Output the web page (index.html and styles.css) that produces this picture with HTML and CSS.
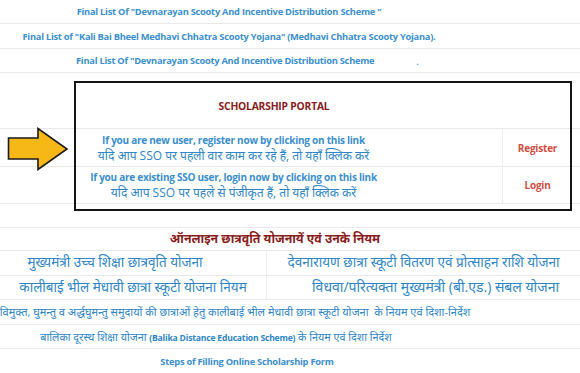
FILE: index.html
```html
<!DOCTYPE html>
<html lang="hi">
<head>
<meta charset="utf-8">
<title>Scholarship Portal</title>
<link rel="stylesheet" href="styles.css">
</head>
<body>
<div class="page">
  <div class="row link-row r1"><a class="en-link" href="#">Final List Of "Devnarayan Scooty And Incentive Distribution Scheme "</a></div>
  <div class="row link-row r2"><a class="en-link" href="#">Final List of "Kali Bai Bheel Medhavi Chhatra Scooty Yojana" (Medhavi Chhatra Scooty Yojana).</a></div>
  <div class="row link-row r3"><a class="en-link" href="#">Final List Of "Devnarayan Scooty And Incentive Distribution Scheme</a><span class="dot">.</span></div>

  <section class="portal">
    <div class="row portal-title"><h2>SCHOLARSHIP PORTAL</h2></div>
    <div class="row portal-row reg">
      <div class="info">
        <span class="en">If you are new user, register now by clicking on this link</span>
        <span class="hi">यदि आप SSO पर पहली वार काम कर रहे हैं, तो यहाँ क्लिक करें</span>
      </div>
      <div class="action"><a href="#">Register</a></div>
    </div>
    <div class="row portal-row login">
      <div class="info">
        <span class="en">If you are existing SSO user, login now by clicking on this link</span>
        <span class="hi">यदि आप SSO पर पहले से पंजीकृत हैं, तो यहाँ क्लिक करें</span>
      </div>
      <div class="action"><a href="#">Login</a></div>
    </div>
    <div class="frame"></div>
    <svg class="arrow" width="62" height="44" viewBox="0 0 62 44" aria-hidden="true">
      <polygon points="1.5,11 31,11 31,1.5 60,22 31,42.5 31,32 1.5,32" fill="#f5b816" stroke="#1a1a1a" stroke-width="1.6" stroke-linejoin="miter"/>
    </svg>
  </section>

  <div class="row spacer"></div>
  <div class="row heading"><h3>ऑनलाइन छात्रवृति योजनायें एवं उनके नियम</h3></div>
  <div class="row pair p1">
    <a class="hi-link left" href="#">मुख्यमंत्री उच्च शिक्षा छात्रवृति योजना</a>
    <a class="hi-link right" href="#">देवनारायण छात्रा स्कूटी वितरण एवं प्रोत्साहन राशि योजना</a>
  </div>
  <div class="row pair p2">
    <a class="hi-link left" href="#">कालीबाई भील मेधावी छात्रा स्कूटी योजना नियम</a>
    <a class="hi-link right" href="#">विधवा/परित्यक्ता मुख्यमंत्री (बी.एड.) संबल योजना</a>
  </div>
  <div class="row full f1"><a class="hi-link" href="#">विमुक्त, घुमन्तु व अर्द्धघुमन्तु समुदायों की छात्राओं हेतु कालीबाई भील मेधावी छात्रा स्कूटी योजना&nbsp; के नियम एवं दिशा-निर्देश</a></div>
  <div class="row full f2"><a class="hi-link" href="#">बालिका दूरस्थ शिक्षा योजना <span class="en-in">(Balika Distance Education Scheme)</span> के नियम एवं दिशा निर्देश</a></div>
  <div class="row full f3"><a class="en-link" href="#">Steps of Filling Online Scholarship Form</a></div>
</div>
</body>
</html>
```

FILE: styles.css
```css
* { box-sizing: border-box; }
html, body { margin: 0; padding: 0; background: #fff; }
body {
  font-family: "Open Sans", "Noto Sans Devanagari", "Noto Sans", sans-serif;
  width: 580px;
  height: 373px;
  overflow: hidden;
}
a { text-decoration: none; }
.page { width: 580px; }

.row {
  border-bottom: 1px solid #e9e9e9;
  display: flex;
  align-items: center;
}

.en-link {
  color: #3b8fd0;
  font-weight: 700;
  font-size: 9.3px;
  letter-spacing: -0.25px;
  white-space: nowrap;
}
.hi-link {
  color: #2f86c9;
  font-size: 13.5px;
  white-space: nowrap;
}

.link-row { justify-content: center; padding-right: 122px; }
.r1 { height: 24px; }
.r2 { height: 25px; }
.r3 { height: 24px; justify-content: flex-start; padding-left: 76px; padding-right: 0; }
.dot { color: #3b8fd0; margin-left: 42px; font-size: 10px; }

.portal { position: relative; }
.portal-title {
  height: 56px;
  justify-content: center;
  align-items: flex-end;
  padding: 0 32px 15px 0;
}
.portal-title h2 {
  margin: 0;
  font-size: 10.3px;
  font-weight: 700;
  letter-spacing: -0.2px;
  color: #8a1c1c;
}
.portal-row { align-items: stretch; }
.reg { height: 38px; }
.login { height: 37px; }
.info {
  width: 503px;
  padding-right: 35px;
  display: flex;
  flex-direction: column;
  align-items: center;
  justify-content: center;
  line-height: 15px;
  border-right: 1px solid #ececec;
}
.info .en { color: #3b8fd0; font-weight: 700; font-size: 10px; letter-spacing: -0.25px; white-space: nowrap; }
.info .hi { color: #2f86c9; font-size: 12px; white-space: nowrap; }
.action {
  width: 69px;
  display: flex;
  align-items: center;
  justify-content: center;
}
.action a { color: #d24e42; font-weight: 700; font-size: 10px; letter-spacing: -0.2px; }

.frame {
  position: absolute;
  left: 74px;
  top: 8px;
  width: 498px;
  height: 130px;
  border: 2.5px solid #151515;
  pointer-events: none;
}
.arrow {
  position: absolute;
  left: 7px;
  top: 54px;
}

.spacer { height: 24px; }
.heading { height: 23px; justify-content: center; padding-right: 30px; }
.heading h3 {
  margin: 0;
  font-size: 12.3px;
  font-weight: 700;
  color: #8a1c1c;
}

.pair { align-items: stretch; }
.p1 { height: 25px; }
.p2 { height: 24px; }
.pair .left {
  width: 267px;
  border-right: 1px solid #ececec;
  display: flex;
  align-items: center;
  justify-content: center;
}
.p1 .left { padding-right: 36px; }
.pair .right {
  flex: 1;
  display: flex;
  align-items: center;
  justify-content: center;
}
.p2 .right { padding-left: 24px; font-size: 14px; }
.full { justify-content: center; padding-right: 110px; }
.f1 { height: 25px; }
.f1 .hi-link { font-size: 11px; }
.f2 { height: 24px; padding-right: 148px; }
.f2 .hi-link { font-size: 10.8px; }
.f3 { height: 25px; border-bottom: none; padding-right: 86px; }
.en-in { font-size: 8.6px; font-weight: 700; letter-spacing: -0.2px; }
```
